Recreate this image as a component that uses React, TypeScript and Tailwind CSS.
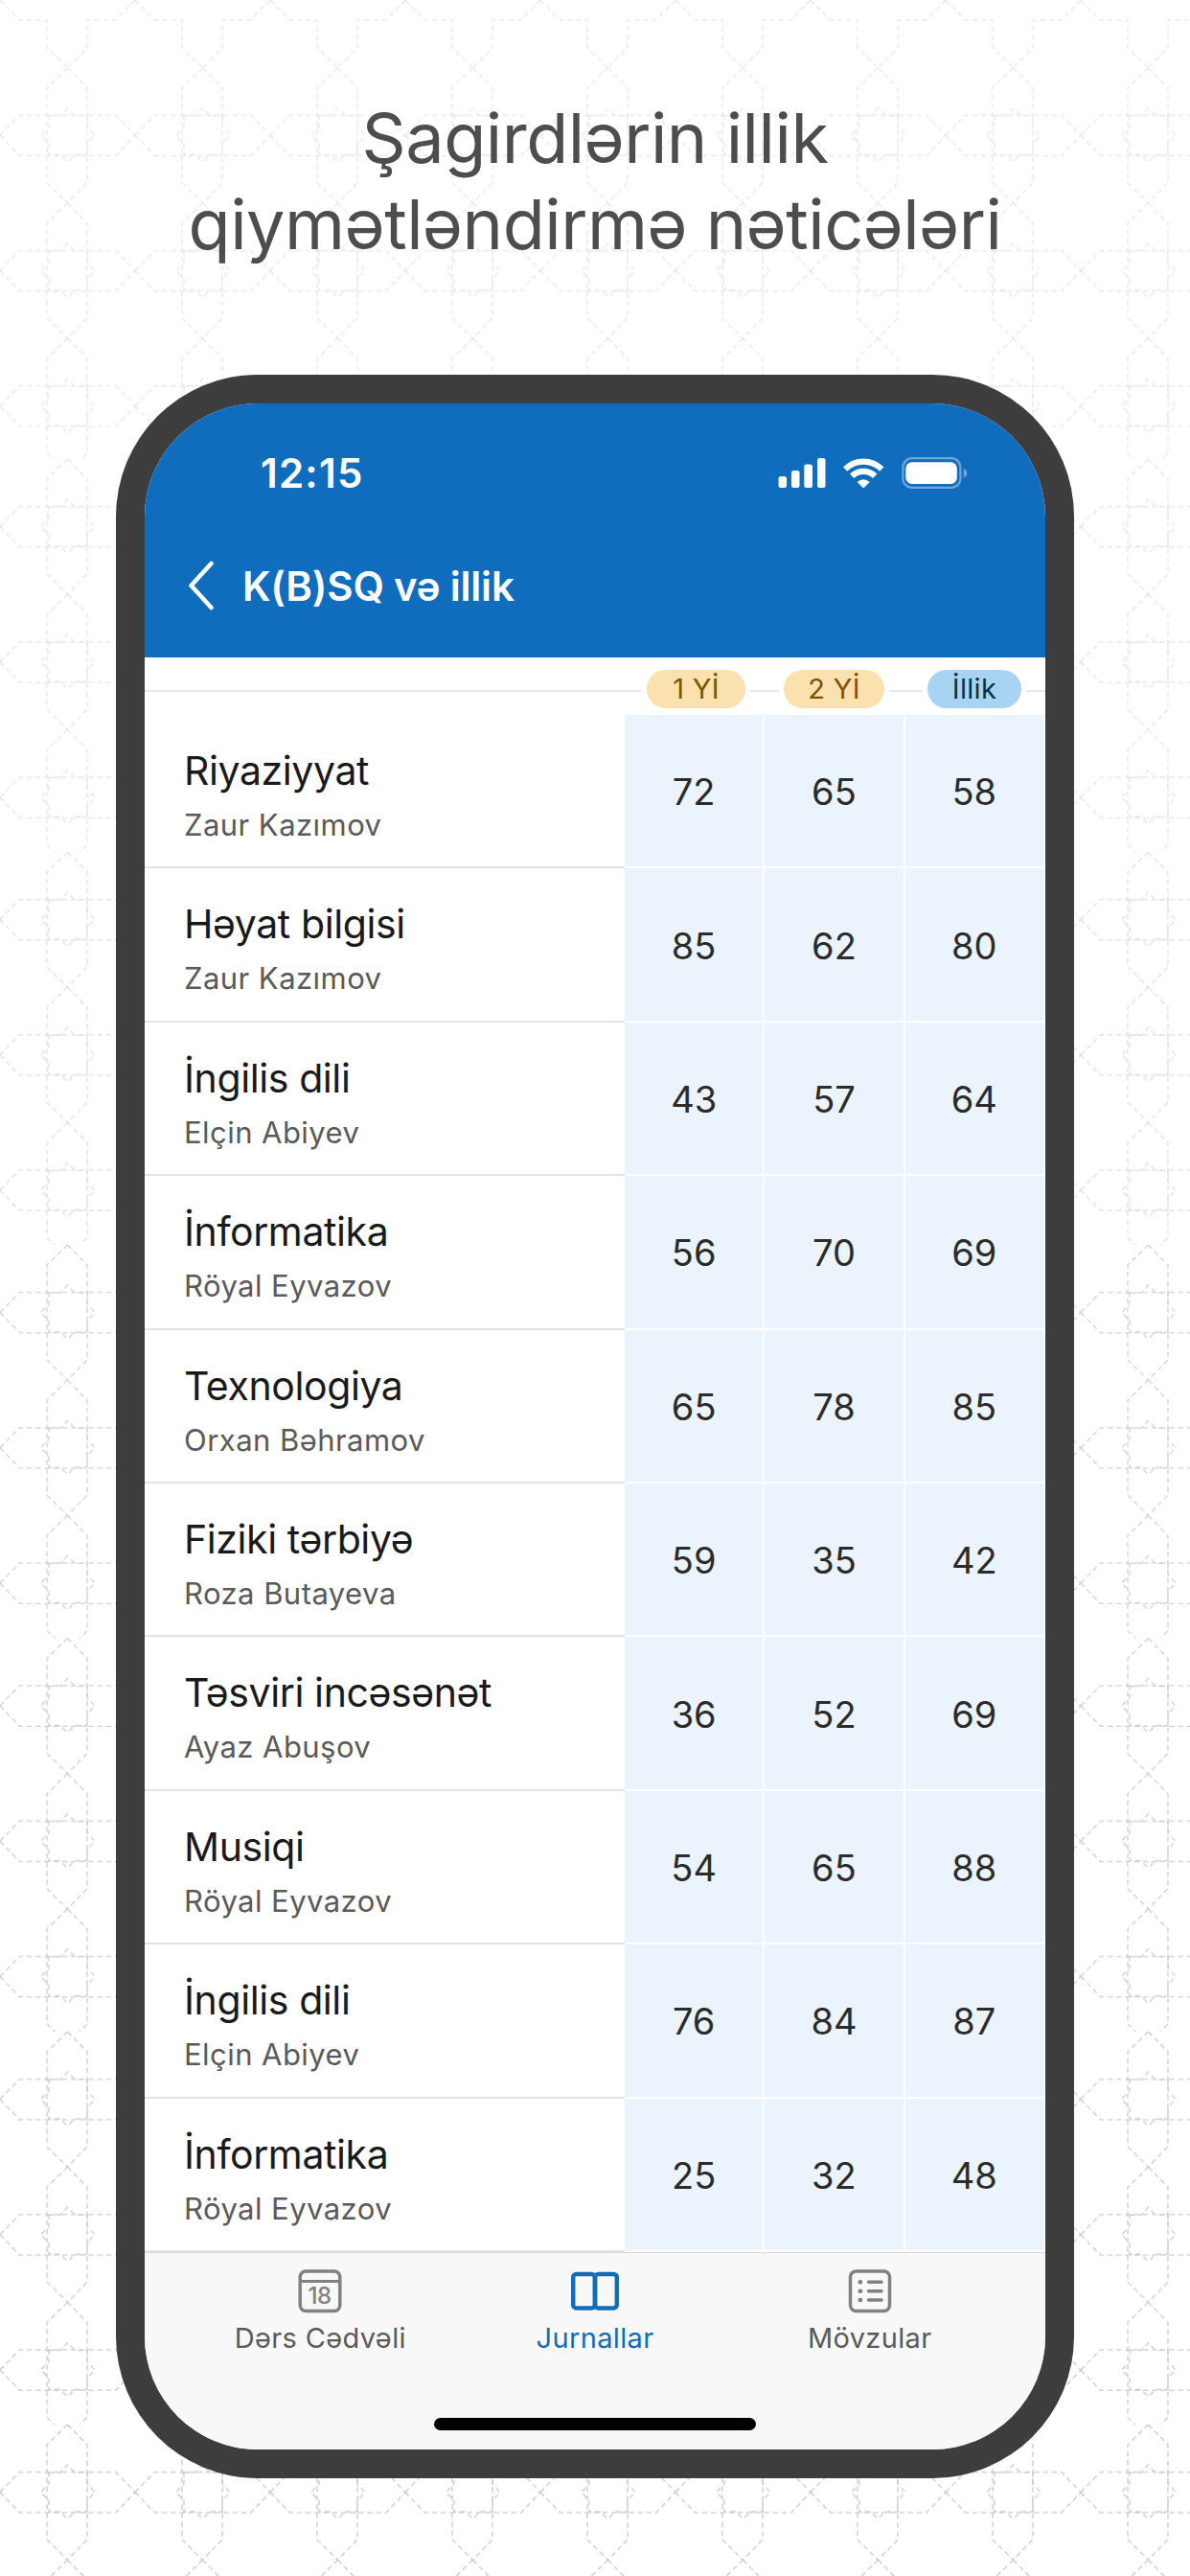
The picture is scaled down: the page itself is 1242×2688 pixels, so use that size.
import { SVGProps } from 'react';

const subjects = [
  { name: 'Riyaziyyat', teacher: 'Zaur Kazımov', marks: [72, 65, 58] },
  { name: 'Həyat bilgisi', teacher: 'Zaur Kazımov', marks: [85, 62, 80] },
  { name: 'İngilis dili', teacher: 'Elçin Abiyev', marks: [43, 57, 64] },
  { name: 'İnformatika', teacher: 'Röyal Eyvazov', marks: [56, 70, 69] },
  { name: 'Texnologiya', teacher: 'Orxan Bəhramov', marks: [65, 78, 85] },
  { name: 'Fiziki tərbiyə', teacher: 'Roza Butayeva', marks: [59, 35, 42] },
  { name: 'Təsviri incəsənət', teacher: 'Ayaz Abuşov', marks: [36, 52, 69] },
  { name: 'Musiqi', teacher: 'Röyal Eyvazov', marks: [54, 65, 88] },
  { name: 'İngilis dili', teacher: 'Elçin Abiyev', marks: [76, 84, 87] },
  { name: 'İnformatika', teacher: 'Röyal Eyvazov', marks: [25, 32, 48] },
];

// Every band restarts the tile, so the stars are cut short at each seam
const bands = [
  { y: 70.7, height: 408.3, color: '#e8e8e8' },
  { y: 479, height: 410, color: '#e6e6e6' },
  { y: 889, height: 410, color: '#e0e0e0' },
  { y: 1299, height: 410.5, color: '#d2d2d2' },
  { y: 1709.5, height: 410.5, color: '#cecece' },
  { y: 2120, height: 410, color: '#cbcbcb' },
  { y: 2530, height: 158, color: '#c8c8c8' },
];

function Backdrop() {
  return (
    <svg className="absolute inset-0" width="1242" height="2688" fill="none">
      <defs>
        <pattern id="star-top" width="141" height="141.2" patternUnits="userSpaceOnUse">
          <path
            d="M0 0 L20.5 21 H49 V50 L70.5 70.7 M141 0 L120.5 21 H91 V50 L70.5 70.7"
            stroke="#e8e8e8"
            strokeWidth="1.3"
            strokeDasharray="5.5 3.7"
          />
        </pattern>
        {bands.map((band, i) => (
          <pattern key={i} id={`star-${i}`} x="0" y={band.y} width="141" height="141.2" patternUnits="userSpaceOnUse">
            <g stroke={band.color} strokeWidth="1.3" strokeDasharray="5.5 3.7">
              <path d="M70.5 0 L49 21 V120 L70.5 141.2 M70.5 0 L91 21 V120 L70.5 141.2" />
              <path d="M0 70.6 L20.5 49.5 H121 L141 70.6 M0 70.6 L20.5 91.8 H121 L141 70.6" />
              <path d="M51 50 H63 L70.5 42 L78 50 H91 V62 L99 70.6 L91 79 V91 H78 L70.5 98.5 L63 91 H51 V79 L42.5 70.6 L51 62 Z" />
            </g>
          </pattern>
        ))}
      </defs>
      <rect width="1242" height="70.7" fill="url(#star-top)" />
      {bands.map((band, i) => (
        <rect key={i} y={band.y} width="1242" height={band.height} fill={`url(#star-${i})`} />
      ))}
    </svg>
  );
}

function StatusIcons() {
  return (
    <svg className="mt-0.5" width="200" height="34" viewBox="0 0 200 34" fill="none">
      <g fill="white">
        <rect x="0.5" y="20" width="8.5" height="12" rx="2.5" />
        <rect x="14" y="14" width="8.5" height="18" rx="2.5" />
        <rect x="27.3" y="7.5" width="8.7" height="24.5" rx="2.5" />
        <rect x="41" y="1" width="8.5" height="31" rx="2.5" />
      </g>
      <g transform="translate(-.8 0)">
        <path d="M71 12.5 A27 27 0 0 1 109 12.5" stroke="white" strokeWidth="6.2" />
        <path d="M78 19.8 A17 17 0 0 1 102 19.8" stroke="white" strokeWidth="6.2" />
        <path d="M83.5 26 Q90 20.5 96.5 26 L90 32.5 Z" fill="white" />
      </g>
      <rect x="130.4" y="1.1" width="60" height="30.8" rx="9.5" stroke="white" strokeOpacity=".4" strokeWidth="2.2" />
      <rect x="133.3" y="5.3" width="53.5" height="22.6" rx="6.5" fill="white" />
      <path d="M193.7 12 Q197.2 13.300 197.2 16.700 Q197.2 20 193.7 21.500 Z" fill="white" fillOpacity=".4" />
    </svg>
  );
}

function CalendarIcon(props: SVGProps<SVGSVGElement>) {
  return (
    <svg width="46" height="46" viewBox="0 0 46 46" fill="none" stroke="currentColor" strokeWidth="3.5" {...props}>
      <rect x="2.2" y="1.9" width="41.600" height="41.600" rx="6" />
      <path d="M2 12.600 H44" strokeWidth="3" />
      <text x="22.5" y="36" textAnchor="middle" fill="currentColor" stroke="none" className="font-['Inter'] text-[24px] font-medium tracking-[-0.5px]">18</text>
    </svg>
  );
}

function BookIcon(props: SVGProps<SVGSVGElement>) {
  return (
    <svg width="50" height="46" viewBox="0 0 50 46" fill="none" stroke="currentColor" strokeWidth="4.5" {...props}>
      <rect x="2.2" y="4.900" width="22.8" height="35.6" rx="3.5" />
      <rect x="25" y="4.900" width="22.8" height="35.6" rx="3.5" />
    </svg>
  );
}

function ListIcon(props: SVGProps<SVGSVGElement>) {
  return (
    <svg width="46" height="46" viewBox="0 0 46 46" fill="none" stroke="currentColor" strokeWidth="3.5" strokeLinecap="round" {...props}>
      <rect x="2.5" y="1.9" width="41" height="41.6" rx="6" />
      <path d="M21.5 13.3 H35 M21.5 22.7 H35 M21.5 32 H35" />
      <path d="M12.700 13.3 H13 M12.700 22.7 H13 M12.700 32 H13" strokeWidth="4.6" />
    </svg>
  );
}

const tabs = [
  { label: 'Dərs Cədvəli', icon: CalendarIcon, active: false },
  { label: 'Jurnallar', icon: BookIcon, active: true },
  { label: 'Mövzular', icon: ListIcon, active: false },
];

export default function App() {
  return (
    <div className="relative w-[1242px] h-[2688px] overflow-hidden bg-white font-['Inter','Liberation_Sans',sans-serif]">
      <Backdrop />

      <div className="relative flex flex-col items-center pt-[99px]">
        <h1 className="h-[292px] text-center text-[72px] leading-[90px] tracking-[-0.5px] text-[#4d4d4d]">
          Şagirdlərin illik
          <br />
          qiymətləndirmə nəticələri
        </h1>

        {/* Phone */}
        <div className="w-[1000px] h-[2195px] rounded-[148px] bg-[#3d3d3d] p-[30px]">
          <div className="flex h-full flex-col overflow-hidden rounded-[118px] bg-white">
            <header className="h-[265px] shrink-0 bg-[#106cbd] text-white">
              <div className="flex h-[144px] items-center justify-between pl-[121px] pr-[79px]">
                <span className="text-[42px] font-semibold tracking-[1.2px]">12:15</span>
                <StatusIcons />
              </div>
              <div className="flex h-[92px] items-center pl-[45px]">
                <svg width="28" height="52" viewBox="0 0 28 52" fill="none" stroke="white" strokeWidth="4.5" strokeLinecap="round" strokeLinejoin="round">
                  <path d="M24.5 3 L3.5 26 L24.5 49" />
                </svg>
                <span className="ml-[29px] text-[42px] font-semibold tracking-[-0.2px]">K(B)SQ və illik</span>
              </div>
            </header>

            <div className="flex h-[60px] shrink-0 items-start pt-[13px] text-[29px] tracking-[0.3px]">
              <div className="mt-[21px] h-0.5 w-[518px] bg-[#e8e8e8]" />
              <div className="ml-[6px] flex h-10 w-[103px] items-center justify-center rounded-full bg-[#fae1ae] text-[#7f5200]">1 Yİ</div>
              <div className="mx-[5px] mt-[21px] h-0.5 w-[30px] bg-[#e8e8e8]" />
              <div className="flex h-10 w-[105px] items-center justify-center rounded-full bg-[#fae1ae] text-[#7f5200]">2 Yİ</div>
              <div className="mx-[5px] mt-[21px] h-0.5 w-[35px] bg-[#e8e8e8]" />
              <div className="flex h-10 w-[98px] items-center justify-center rounded-full bg-[#a9d3f2] text-[#00363f]">İllik</div>
              <div className="ml-[5px] mt-[21px] h-0.5 flex-1 bg-[#e8e8e8]" />
            </div>

            <div className="shrink-0">
              {subjects.map((subject, index) => (
                <div key={index} className="flex h-[160.4px]">
                  <div className="flex w-[501px] flex-col border-b-2 border-[#e3e3e3] pl-[41px] pt-[33px]">
                    <span className="text-[41px] leading-[50px] tracking-[-0.4px] text-[#1a1a1a]">{subject.name}</span>
                    <span className="mt-[13px] text-[31px] leading-[38px] tracking-[0.45px] text-[#5a5a5a]">{subject.teacher}</span>
                  </div>
                  {subject.marks.map((mark, i) => (
                    <div key={i} className="flex w-[146.3px] items-center justify-center border-b-2 border-r-2 border-white bg-[#ebf3fc] pt-[3px] text-[38px] text-[#2b2b2b]">
                      {mark}
                    </div>
                  ))}
                </div>
              ))}
            </div>

            <nav className="flex flex-1 flex-col items-center border-t border-[#dadada] bg-[#f8f8f8]">
              <div className="flex w-[860px] pt-[17px]">
                {tabs.map((tab) => (
                  <div key={tab.label} className={`flex flex-1 flex-col items-center ${tab.active ? 'text-[#106cbd]' : 'text-[#5a5a5a]'}`}>
                    <tab.icon className={tab.active ? 'text-[#106cbd]' : 'text-[#808080]'} />
                    <span className="mt-[6px] text-[29px] leading-[40px] tracking-[0.35px]">{tab.label}</span>
                  </div>
                ))}
              </div>
              <div className="mt-[63px] h-[13px] w-[336px] rounded-full bg-black" />
            </nav>
          </div>
        </div>
      </div>
    </div>
  );
}
